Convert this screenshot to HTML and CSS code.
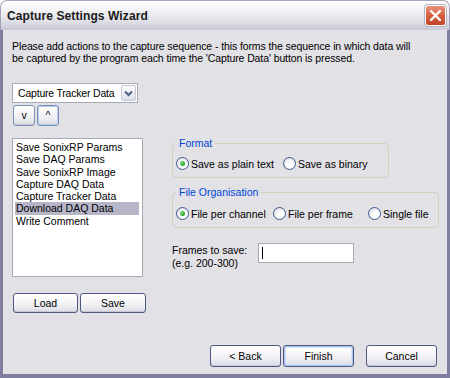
FILE: index.html
```html
<!DOCTYPE html>
<html lang="en">
  <head>
    <meta charset="UTF-8" />
    <title>Capture Settings Wizard</title>
    <link rel="stylesheet" href="styles.css">
  </head>
  <body>
    <div class="window">
      <!-- title bar -->
      <div class="titlebar">
        <span class="title">Capture Settings Wizard</span>
        <button class="close-btn">
          <svg width="13" height="13" viewBox="0 0 13 13">
            <path d="M2 2 L11 11 M11 2 L2 11" stroke="#fff" stroke-width="2.4" stroke-linecap="round" />
          </svg>
        </button>
      </div>

      <div class="client">
        <p class="intro">
          Please add actions to the capture sequence - this forms the sequence in which data will<br />
          be captured by the program each time the 'Capture Data' button is pressed.
        </p>

        <div class="main">
          <!-- sequence column -->
          <div class="left-col">
            <div class="combo">
              <span class="combo-text">Capture Tracker Data</span>
              <span class="combo-arrow">
                <svg width="9" height="7" viewBox="0 0 9 7">
                  <path d="M1 1.5 L4.5 5 L8 1.5" fill="none" stroke="#4d6185" stroke-width="2" />
                </svg>
              </span>
            </div>
            <div class="move-btns">
              <button class="btn small-btn">v</button>
              <button class="btn small-btn focused">^</button>
            </div>
            <ul class="seq-list">
              <li>Save SonixRP Params</li>
              <li>Save DAQ Params</li>
              <li>Save SonixRP Image</li>
              <li>Capture DAQ Data</li>
              <li>Capture Tracker Data</li>
              <li class="selected">Download DAQ Data</li>
              <li>Write Comment</li>
            </ul>
            <div class="file-btns">
              <button class="btn load-btn">Load</button>
              <button class="btn save-btn">Save</button>
            </div>
          </div>

          <!-- options column -->
          <div class="right-col">
            <fieldset class="group format-group">
              <legend>Format</legend>
              <div class="radio-row">
                <label class="radio w-plain"><span class="dot checked"></span>Save as plain text</label>
                <label class="radio"><span class="dot"></span>Save as binary</label>
              </div>
            </fieldset>

            <fieldset class="group org-group">
              <legend>File Organisation</legend>
              <div class="radio-row">
                <label class="radio w-channel"><span class="dot checked"></span>File per channel</label>
                <label class="radio w-frame"><span class="dot"></span>File per frame</label>
                <label class="radio"><span class="dot"></span>Single file</label>
              </div>
            </fieldset>

            <div class="frames">
              <div class="frames-label">Frames to save:<br />(e.g. 200-300)</div>
              <div class="text-input"><span class="caret"></span></div>
            </div>
          </div>
        </div>

        <div class="footer">
          <button class="btn nav-btn">&lt; Back</button>
          <button class="btn nav-btn default">Finish</button>
          <button class="btn nav-btn cancel-btn">Cancel</button>
        </div>
      </div>
    </div>
  </body>
</html>
```

FILE: styles.css
```css
* {
  margin: 0;
  padding: 0;
  box-sizing: border-box;
}
body {
  width: 450px;
  height: 378px;
  background-color: #ffffff;
  font-family: "Liberation Sans", Arial, sans-serif;
  font-size: 10.5px;
  color: #000000;
  overflow: hidden;
}
.window {
  width: 450px;
  height: 378px;
  display: flex;
  flex-direction: column;
}

/* title bar */
.titlebar {
  height: 30px;
  border: 1px solid #a4a3b8;
  border-bottom: 0;
  border-radius: 7px 7px 0 0;
  background: linear-gradient(#ffffff, #f1f1f4 35%, #dcdce4 75%, #c8c8d5);
  display: flex;
  align-items: center;
  justify-content: space-between;
  padding: 0 3px 0 6px;
}
.title {
  font-weight: bold;
  font-size: 12px;
  color: #1a1a1a;
  letter-spacing: 0.1px;
}
.close-btn {
  width: 21px;
  height: 21px;
  border: 1px solid #ffffff;
  border-radius: 3px;
  background: linear-gradient(#e8927a, #d5603f 50%, #c34526);
  box-shadow: 0 0 0 1px #b8b2c4;
  display: flex;
  align-items: center;
  justify-content: center;
}

/* client area */
.client {
  flex: 1;
  background-color: #e2e1e6;
  border: 3px solid #7f7e9e;
  border-top: 0;
  border-bottom-width: 4px;
  display: flex;
  flex-direction: column;
  padding: 10px 10px 7px 9px;
}
.intro {
  line-height: 12px;
  letter-spacing: -0.1px;
}
.main {
  display: flex;
  margin-top: 19px;
}

/* left column */
.left-col {
  width: 134px;
  display: flex;
  flex-direction: column;
}
.combo {
  width: 126px;
  height: 20px;
  background-color: #ffffff;
  border: 1px solid #a5acb5;
  display: flex;
  align-items: center;
  justify-content: space-between;
  padding: 1px;
}
.combo-text {
  padding-left: 4px;
  letter-spacing: -0.2px;
}
.combo-arrow {
  width: 15px;
  height: 16px;
  border: 1px solid #c3c6d6;
  border-radius: 2px;
  background: linear-gradient(#fdfdfe, #dedee8);
  display: flex;
  align-items: center;
  justify-content: center;
}
.btn {
  font-family: "Liberation Sans", Arial, sans-serif;
  font-size: 10.5px;
  color: #000000;
  border: 1px solid #4e5a82;
  border-radius: 3px;
  background: linear-gradient(#ffffff, #f4f4f7 50%, #dcdce6);
  box-shadow: inset 0 -1px 0 #c6c6d4;
}
.move-btns {
  display: flex;
  gap: 2px;
  margin-top: 2px;
  padding-left: 1px;
}
.small-btn {
  width: 22px;
  height: 21px;
  border-color: #7b8fb5;
  line-height: 1;
}
.small-btn.focused {
  box-shadow: inset 0 0 0 1px #b7cdf0;
}
.seq-list {
  list-style: none;
  margin-top: 12px;
  width: 131px;
  height: 139px;
  background-color: #ffffff;
  border: 1px solid #a5acb5;
  padding: 2px 3px 2px 2px;
}
.seq-list li {
  line-height: 12.3px;
  padding-left: 1px;
}
.seq-list li.selected {
  background-color: #b7b6c9;
}
.file-btns {
  display: flex;
  gap: 2px;
  margin-top: 16px;
  padding-left: 1px;
}
.load-btn {
  width: 66px;
  height: 20px;
}
.save-btn {
  width: 67px;
  height: 20px;
}

/* right column */
.right-col {
  margin-left: 26px;
  margin-top: 54px;
  display: flex;
  flex-direction: column;
}
.group {
  border: 1px solid #d0d0bf;
  border-radius: 4px;
  padding: 8px 3px 7px 3px;
}
.group legend {
  color: #0046d5;
  line-height: 12px;
  padding: 0 3px;
}
.format-group {
  width: 217px;
}
.org-group {
  width: 267px;
  margin-top: 8px;
  padding-top: 9px;
}
.radio-row {
  display: flex;
  height: 13px;
  align-items: center;
}
.radio {
  display: flex;
  align-items: center;
  gap: 2px;
}
.w-plain {
  width: 107px;
}
.w-channel {
  width: 97px;
}
.w-frame {
  width: 95px;
}
.dot {
  width: 13px;
  height: 13px;
  border-radius: 50%;
  border: 1px solid #3a5a8c;
  background: radial-gradient(circle at 60% 65%, #ffffff 30%, #e6e6ee 70%, #cfcfd8);
  display: flex;
  align-items: center;
  justify-content: center;
}
.dot.checked::after {
  content: "";
  width: 5px;
  height: 5px;
  border-radius: 50%;
  background: radial-gradient(circle at 35% 35%, #7fe07f, #21a121 70%);
}
.frames {
  display: flex;
  margin-top: 15px;
}
.frames-label {
  width: 86px;
  line-height: 13px;
  padding-top: 1px;
}
.text-input {
  width: 96px;
  height: 20px;
  background-color: #ffffff;
  border: 1px solid #a5acb5;
  padding: 3px 0 0 3px;
}
.caret {
  display: block;
  width: 1px;
  height: 12px;
  background-color: #000000;
}

/* footer buttons */
.footer {
  margin-top: auto;
  display: flex;
  justify-content: flex-end;
  gap: 2px;
}
.nav-btn {
  width: 71px;
  height: 22px;
}
.nav-btn.default {
  box-shadow: inset 0 0 0 1px #a8c3ee, inset 0 0 0 2px #d4e2f8;
}
.cancel-btn {
  margin-left: 10px;
}
```
